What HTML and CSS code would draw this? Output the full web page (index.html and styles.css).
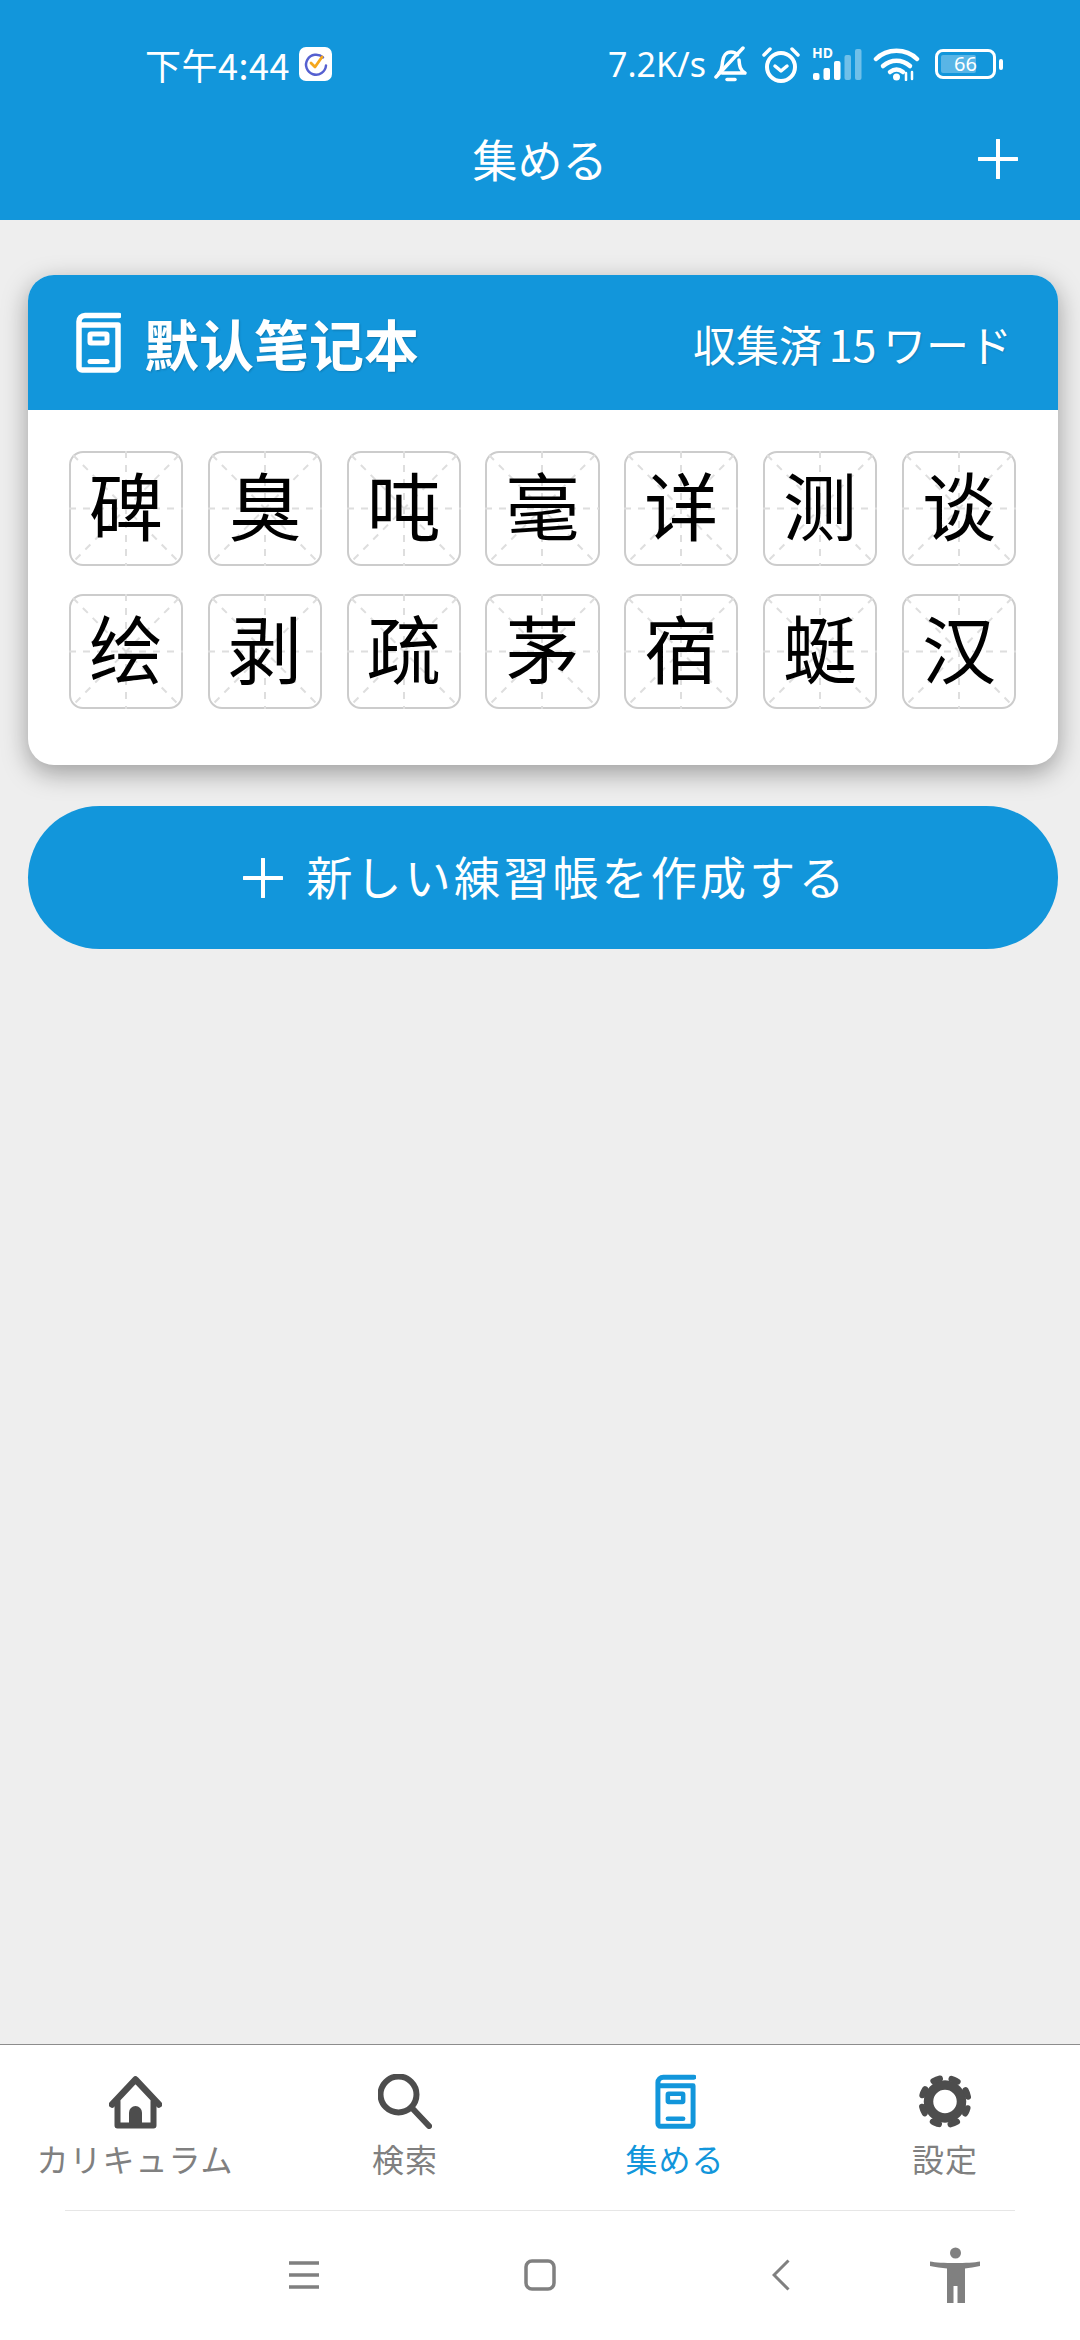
FILE: index.html
```html
<!DOCTYPE html>
<html lang="ja">
  <head>
    <meta charset="UTF-8" />
    <meta name="viewport" content="width=device-width, initial-scale=1.0" />
    <title>集める</title>
    <link rel="stylesheet" href="styles.css">
  </head>
  <body>
    <!-- Shared shapes -->
    <svg class="defs" aria-hidden="true">
      <symbol id="book" viewBox="0 0 45 61">
        <path d="M43 3.500H9a6 6 0 0 0-6 6V55a3 3 0 0 0 3 3h33a3 3 0 0 0 3-3V13H5" fill="none" stroke="currentColor" stroke-width="5.500" stroke-linecap="round" stroke-linejoin="round"/>
        <rect x="14" y="22" width="17" height="9" rx="1" fill="none" stroke="currentColor" stroke-width="5"/>
        <path d="M14 49.500h17" stroke="currentColor" stroke-width="5" stroke-linecap="round"/>
      </symbol>
      <symbol id="mizi" viewBox="0 0 114 115">
        <path d="M0 57.500H114M57 0V115M4 4L110 111M110 4L4 111" fill="none" stroke="#dedede" stroke-width="2" stroke-dasharray="7 7"/>
      </symbol>
    </svg>

    <!-- Top bar -->
    <header class="top-bar">
      <div class="status-bar">
        <div class="status-left">
          <span class="clock">下午4:44</span>
          <svg class="app-badge" viewBox="0 0 33 34">
            <rect width="33" height="34" rx="7" fill="#fff"/>
            <path d="M24 10.500a10 10 0 1 0 3 8" fill="none" stroke="#5560d0" stroke-width="2.500" stroke-linecap="round"/>
            <path d="M12 16l4 4 7-10" fill="none" stroke="#f5a81c" stroke-width="2.800" stroke-linecap="round" stroke-linejoin="round"/>
          </svg>
        </div>
        <div class="status-right">
          <span class="speed">7.2K/s</span>
          <svg class="icon-bell" viewBox="0 0 34 36" fill="none" stroke="currentColor" stroke-width="3.500" stroke-linecap="round" stroke-linejoin="round">
            <path d="M5 27c3-3 3-6 3.500-11C9 10 12 6 17 6c3 0 5 1 6.500 3M25 14c.5 6 1 10 6 13H8"/>
            <path d="M2 31L29 2"/>
            <path d="M13 33.500h8"/>
          </svg>
          <svg class="icon-alarm" viewBox="0 0 40 37" fill="none" stroke="currentColor" stroke-linecap="round" stroke-linejoin="round">
            <circle cx="20" cy="21" r="14" stroke-width="4"/>
            <path d="M14 20l6 5 6-5" stroke-width="3.500"/>
            <path d="M3 9l6-6M37 9l-6-6" stroke-width="3.500"/>
          </svg>
          <div class="signal">
            <span class="hd">HD</span>
            <svg class="signal-bars" viewBox="0 0 50 32">
              <rect x="1" y="25" width="6.500" height="7" rx="2" fill="#fff"/>
              <rect x="11.500" y="20" width="6.500" height="12" rx="2" fill="#fff"/>
              <rect x="22" y="13" width="6.500" height="19" rx="2" fill="#fff"/>
              <rect x="32.500" y="7" width="6.500" height="25" rx="2" fill="#fff" opacity=".4"/>
              <rect x="43" y="1" width="6.500" height="31" rx="2" fill="#fff" opacity=".4"/>
            </svg>
          </div>
          <svg class="icon-wifi" viewBox="0 0 47 34" fill="none" stroke="currentColor" stroke-width="4.500" stroke-linecap="round">
            <path d="M3 12C14 1 33 1 44 12"/>
            <path d="M10 19c8-7 19-7 27 0"/>
            <path d="M17 25c4-3 9-3 13 0"/>
            <circle cx="23.500" cy="30" r="3.500" fill="currentColor" stroke="none"/>
            <path d="M33 26v7M39 25v7" stroke-width="2.500"/>
          </svg>
          <div class="battery">
            <div class="battery-body">
              <div class="battery-fill"></div>
              <span class="battery-text">66</span>
            </div>
            <div class="battery-cap"></div>
          </div>
        </div>
      </div>
      <div class="title-bar">
        <span></span>
        <h1>集める</h1>
        <svg class="title-plus" viewBox="0 0 40 40">
          <path d="M20 1V39M1 20H39" stroke="#fff" stroke-width="4" stroke-linecap="round"/>
        </svg>
      </div>
    </header>

    <!-- Main Content -->
    <main class="main-content">
      <section class="note-card">
        <div class="note-head">
          <div class="note-name">
            <svg class="note-icon"><use href="#book"/></svg>
            <h2 lang="zh-CN">默认笔记本</h2>
          </div>
          <span class="note-count">収集済 15 ワード</span>
        </div>
        <div class="char-grid" lang="zh-CN">
          <div class="char-cell"><svg class="cell-lines"><use href="#mizi"/></svg><span>碑</span></div>
          <div class="char-cell"><svg class="cell-lines"><use href="#mizi"/></svg><span>臭</span></div>
          <div class="char-cell"><svg class="cell-lines"><use href="#mizi"/></svg><span>吨</span></div>
          <div class="char-cell"><svg class="cell-lines"><use href="#mizi"/></svg><span>毫</span></div>
          <div class="char-cell"><svg class="cell-lines"><use href="#mizi"/></svg><span>详</span></div>
          <div class="char-cell"><svg class="cell-lines"><use href="#mizi"/></svg><span>测</span></div>
          <div class="char-cell"><svg class="cell-lines"><use href="#mizi"/></svg><span>谈</span></div>
          <div class="char-cell"><svg class="cell-lines"><use href="#mizi"/></svg><span>绘</span></div>
          <div class="char-cell"><svg class="cell-lines"><use href="#mizi"/></svg><span>剥</span></div>
          <div class="char-cell"><svg class="cell-lines"><use href="#mizi"/></svg><span>疏</span></div>
          <div class="char-cell"><svg class="cell-lines"><use href="#mizi"/></svg><span>茅</span></div>
          <div class="char-cell"><svg class="cell-lines"><use href="#mizi"/></svg><span>宿</span></div>
          <div class="char-cell"><svg class="cell-lines"><use href="#mizi"/></svg><span>蜓</span></div>
          <div class="char-cell"><svg class="cell-lines"><use href="#mizi"/></svg><span>汉</span></div>
        </div>
      </section>

      <button class="new-button">
        <svg class="new-plus" viewBox="0 0 40 40">
          <path d="M20 1V39M1 20H39" stroke="#fff" stroke-width="4" stroke-linecap="round"/>
        </svg>
        <span>新しい練習帳を作成する</span>
      </button>
    </main>

    <!-- Bottom Tabs -->
    <footer class="bottom-area">
      <nav class="tab-bar">
        <a class="tab-item" href="#">
          <svg class="tab-icon icon-home" viewBox="0 0 53 52" fill="none" stroke="currentColor" stroke-linecap="round" stroke-linejoin="round">
            <path d="M3 28L26.500 3 50 28" stroke-width="6.500"/>
            <path d="M8.500 25V49H44.500V25" stroke-width="6"/>
            <path d="M20 49V36a6.500 6.500 0 0 1 13 0V49Z" fill="currentColor" stroke="none"/>
          </svg>
          <span>カリキュラム</span>
        </a>
        <a class="tab-item" href="#">
          <svg class="tab-icon icon-search" viewBox="0 0 54 55" fill="none" stroke="currentColor" stroke-width="6" stroke-linecap="round">
            <circle cx="20.500" cy="20.500" r="18"/>
            <path d="M34 34L51 52"/>
          </svg>
          <span>検索</span>
        </a>
        <a class="tab-item active" href="#">
          <svg class="tab-icon icon-book"><use href="#book"/></svg>
          <span>集める</span>
        </a>
        <a class="tab-item" href="#">
          <svg class="tab-icon icon-gear" viewBox="0 0 54 54" fill="none" stroke="currentColor">
            <circle cx="27" cy="27" r="16.500" stroke-width="9.500"/>
            <circle cx="27" cy="27" r="23.500" stroke-width="6" stroke-dasharray="7 11.460" stroke-dashoffset="3.500" stroke-linecap="round" transform="rotate(22.500 27 27)"/>
          </svg>
          <span>設定</span>
        </a>
      </nav>
      <div class="tab-line"></div>
      <div class="system-nav">
        <svg class="nav-menu" viewBox="0 0 30 28">
          <path d="M0 2H30M0 14H30M0 26H30" stroke="#808080" stroke-width="3.500"/>
        </svg>
        <svg class="nav-home" viewBox="0 0 32 32">
          <rect x="2" y="2" width="28" height="28" rx="6" fill="none" stroke="#808080" stroke-width="3.500"/>
        </svg>
        <svg class="nav-back" viewBox="0 0 18 32">
          <path d="M16.500 1.500L2 16 16.500 30.500" fill="none" stroke="#808080" stroke-width="3"/>
        </svg>
        <svg class="nav-person" viewBox="0 0 50 56" fill="#808080">
          <circle cx="25.500" cy="6" r="5.500"/>
          <path d="M0 14.500c10 2 40 2 50 0l0 4.500c-5 1-11 2-15 2.500V56H27.500V39h-4V56H17V21.500c-5-.5-12-1.500-17-2.500Z"/>
        </svg>
      </div>
    </footer>
  </body>
</html>
```

FILE: styles.css
```css
* {
  margin: 0;
  padding: 0;
  box-sizing: border-box;
  font-family: "Noto Sans CJK JP", "Noto Sans", sans-serif;
}

body {
  width: 1080px;
  height: 2340px;
  background-color: #eeeeee;
  display: flex;
  flex-direction: column;
  overflow: hidden;
}

.defs {
  display: none;
}

/* Top bar */
.top-bar {
  height: 220px;
  background-color: #1296db;
  color: white;
}

.status-bar {
  height: 98px;
  padding: 46px 77px 0 145px;
  display: flex;
  justify-content: space-between;
  align-items: flex-start;
}

.status-left {
  display: flex;
  align-items: center;
  gap: 9px;
}

.clock {
  font-size: 36px;
  line-height: 36px;
  font-family: "Noto Sans CJK SC", sans-serif;
  letter-spacing: 0.5px;
}

.app-badge {
  width: 33px;
  height: 34px;
}

.status-right {
  display: flex;
  align-items: center;
  gap: 11px;
  height: 36px;
}

.speed {
  font-size: 34px;
  line-height: 36px;
  margin-right: -3px;
  font-family: "Noto Sans", sans-serif;
}

.icon-bell {
  width: 34px;
  height: 36px;
}

.icon-alarm {
  width: 40px;
  height: 37px;
  margin-left: 2px;
}

.signal {
  position: relative;
  width: 50px;
  height: 32px;
}

.signal-bars {
  width: 50px;
  height: 32px;
  display: block;
}

.hd {
  position: absolute;
  top: -2px;
  left: 0;
  font-size: 14px;
  line-height: 14px;
  font-weight: bold;
  font-family: "Noto Sans", sans-serif;
}

.icon-wifi {
  width: 47px;
  height: 34px;
}

.battery {
  display: flex;
  align-items: center;
  gap: 3px;
  margin-left: 4px;
}

.battery-body {
  position: relative;
  width: 61px;
  height: 30px;
  border: 3px solid white;
  border-radius: 8px;
  display: flex;
  justify-content: center;
  align-items: center;
}

.battery-fill {
  position: absolute;
  top: 3px;
  bottom: 3px;
  left: 3px;
  width: 35px;
  background: rgba(255, 255, 255, 0.3);
  border-radius: 2px;
}

.battery-text {
  position: relative;
  font-size: 20px;
  line-height: 20px;
  font-family: "Noto Sans", sans-serif;
}

.battery-cap {
  width: 4px;
  height: 11px;
  background: white;
  border-radius: 2px;
}

.title-bar {
  height: 122px;
  padding: 0 62px;
  display: grid;
  grid-template-columns: 1fr auto 1fr;
  align-items: center;
}

.title-bar h1 {
  font-size: 45px;
  line-height: 60px;
  font-weight: 400;
}

.title-plus {
  width: 40px;
  height: 40px;
  justify-self: end;
}

/* Main Content */
.main-content {
  flex: 1;
  padding: 55px 22px 0 28px;
}

.note-card {
  background: white;
  border-radius: 26px;
  overflow: hidden;
  box-shadow: 0 8px 26px rgba(0, 0, 0, 0.35);
}

.note-head {
  height: 135px;
  background-color: #1296db;
  color: white;
  padding: 0 46px 0 48px;
  display: flex;
  justify-content: space-between;
  align-items: center;
}

.note-name {
  display: flex;
  align-items: center;
  gap: 23px;
}

.note-icon {
  width: 45px;
  height: 61px;
}

.note-name h2 {
  font-size: 55px;
  line-height: 70px;
  margin-bottom: 2px;
  font-weight: 700;
  font-family: "Noto Sans CJK SC", sans-serif;
  text-shadow: 1px 1px 2px rgba(0, 0, 0, 0.2);
}

.note-count {
  font-size: 43px;
  line-height: 60px;
  word-spacing: -3px;
  text-shadow: 1px 1px 2px rgba(0, 0, 0, 0.15);
}

/* Character Grid */
.char-grid {
  padding: 41px 42px 56px 41px;
  display: grid;
  grid-template-columns: repeat(7, 1fr);
  column-gap: 24.600px;
  row-gap: 28px;
}

.char-cell {
  position: relative;
  height: 115px;
  border: 2px solid #cccccc;
  border-radius: 14px;
  display: flex;
  justify-content: center;
  align-items: center;
}

.cell-lines {
  position: absolute;
  top: -2px;
  left: -2px;
  width: 114px;
  height: 115px;
}

.char-cell span {
  position: relative;
  font-size: 74px;
  line-height: 80px;
  margin-bottom: 12px;
  color: #000;
  font-family: "Noto Sans CJK SC", sans-serif;
}

/* New Notebook Button */
.new-button {
  width: 100%;
  height: 143px;
  margin-top: 41px;
  padding-left: 5px;
  background-color: #1296db;
  color: white;
  border: none;
  border-radius: 72px;
  display: flex;
  justify-content: center;
  align-items: center;
  gap: 23px;
}

.new-button span {
  font-size: 46px;
  line-height: 60px;
  letter-spacing: 3.200px;
  margin-bottom: 5px;
}

.new-plus {
  width: 40px;
  height: 40px;
}

/* Bottom Tabs */
.bottom-area {
  height: 296px;
  background: white;
  border-top: 1px solid #8c8c8c;
}

.tab-bar {
  height: 165px;
  padding-top: 29px;
  display: grid;
  grid-template-columns: repeat(4, 1fr);
}

.tab-item {
  display: flex;
  flex-direction: column;
  align-items: center;
  color: #808080;
  text-decoration: none;
}

.tab-icon {
  height: 55px;
  color: #4d4d4d;
}

.icon-home {
  width: 53px;
  margin-top: 2px;
  height: 53px;
}

.icon-search {
  width: 54px;
}

.icon-book {
  width: 41px;
}

.icon-gear {
  width: 54px;
}

.tab-item span {
  margin-top: 9px;
  font-size: 32px;
  line-height: 40px;
  letter-spacing: 1px;
}

.tab-item.active,
.tab-item.active .tab-icon {
  color: #1296db;
}

.tab-line {
  height: 1px;
  margin: 0 65px;
  background: #e6e6e6;
}

.system-nav {
  height: 127px;
  padding-left: 289px;
  display: flex;
  align-items: center;
}

.nav-menu {
  width: 30px;
  height: 28px;
}

.nav-home {
  width: 32px;
  height: 32px;
  margin-left: 205px;
}

.nav-back {
  width: 18px;
  height: 32px;
  margin-left: 216px;
}

.nav-person {
  width: 50px;
  height: 56px;
  margin-left: 140px;
}
```
